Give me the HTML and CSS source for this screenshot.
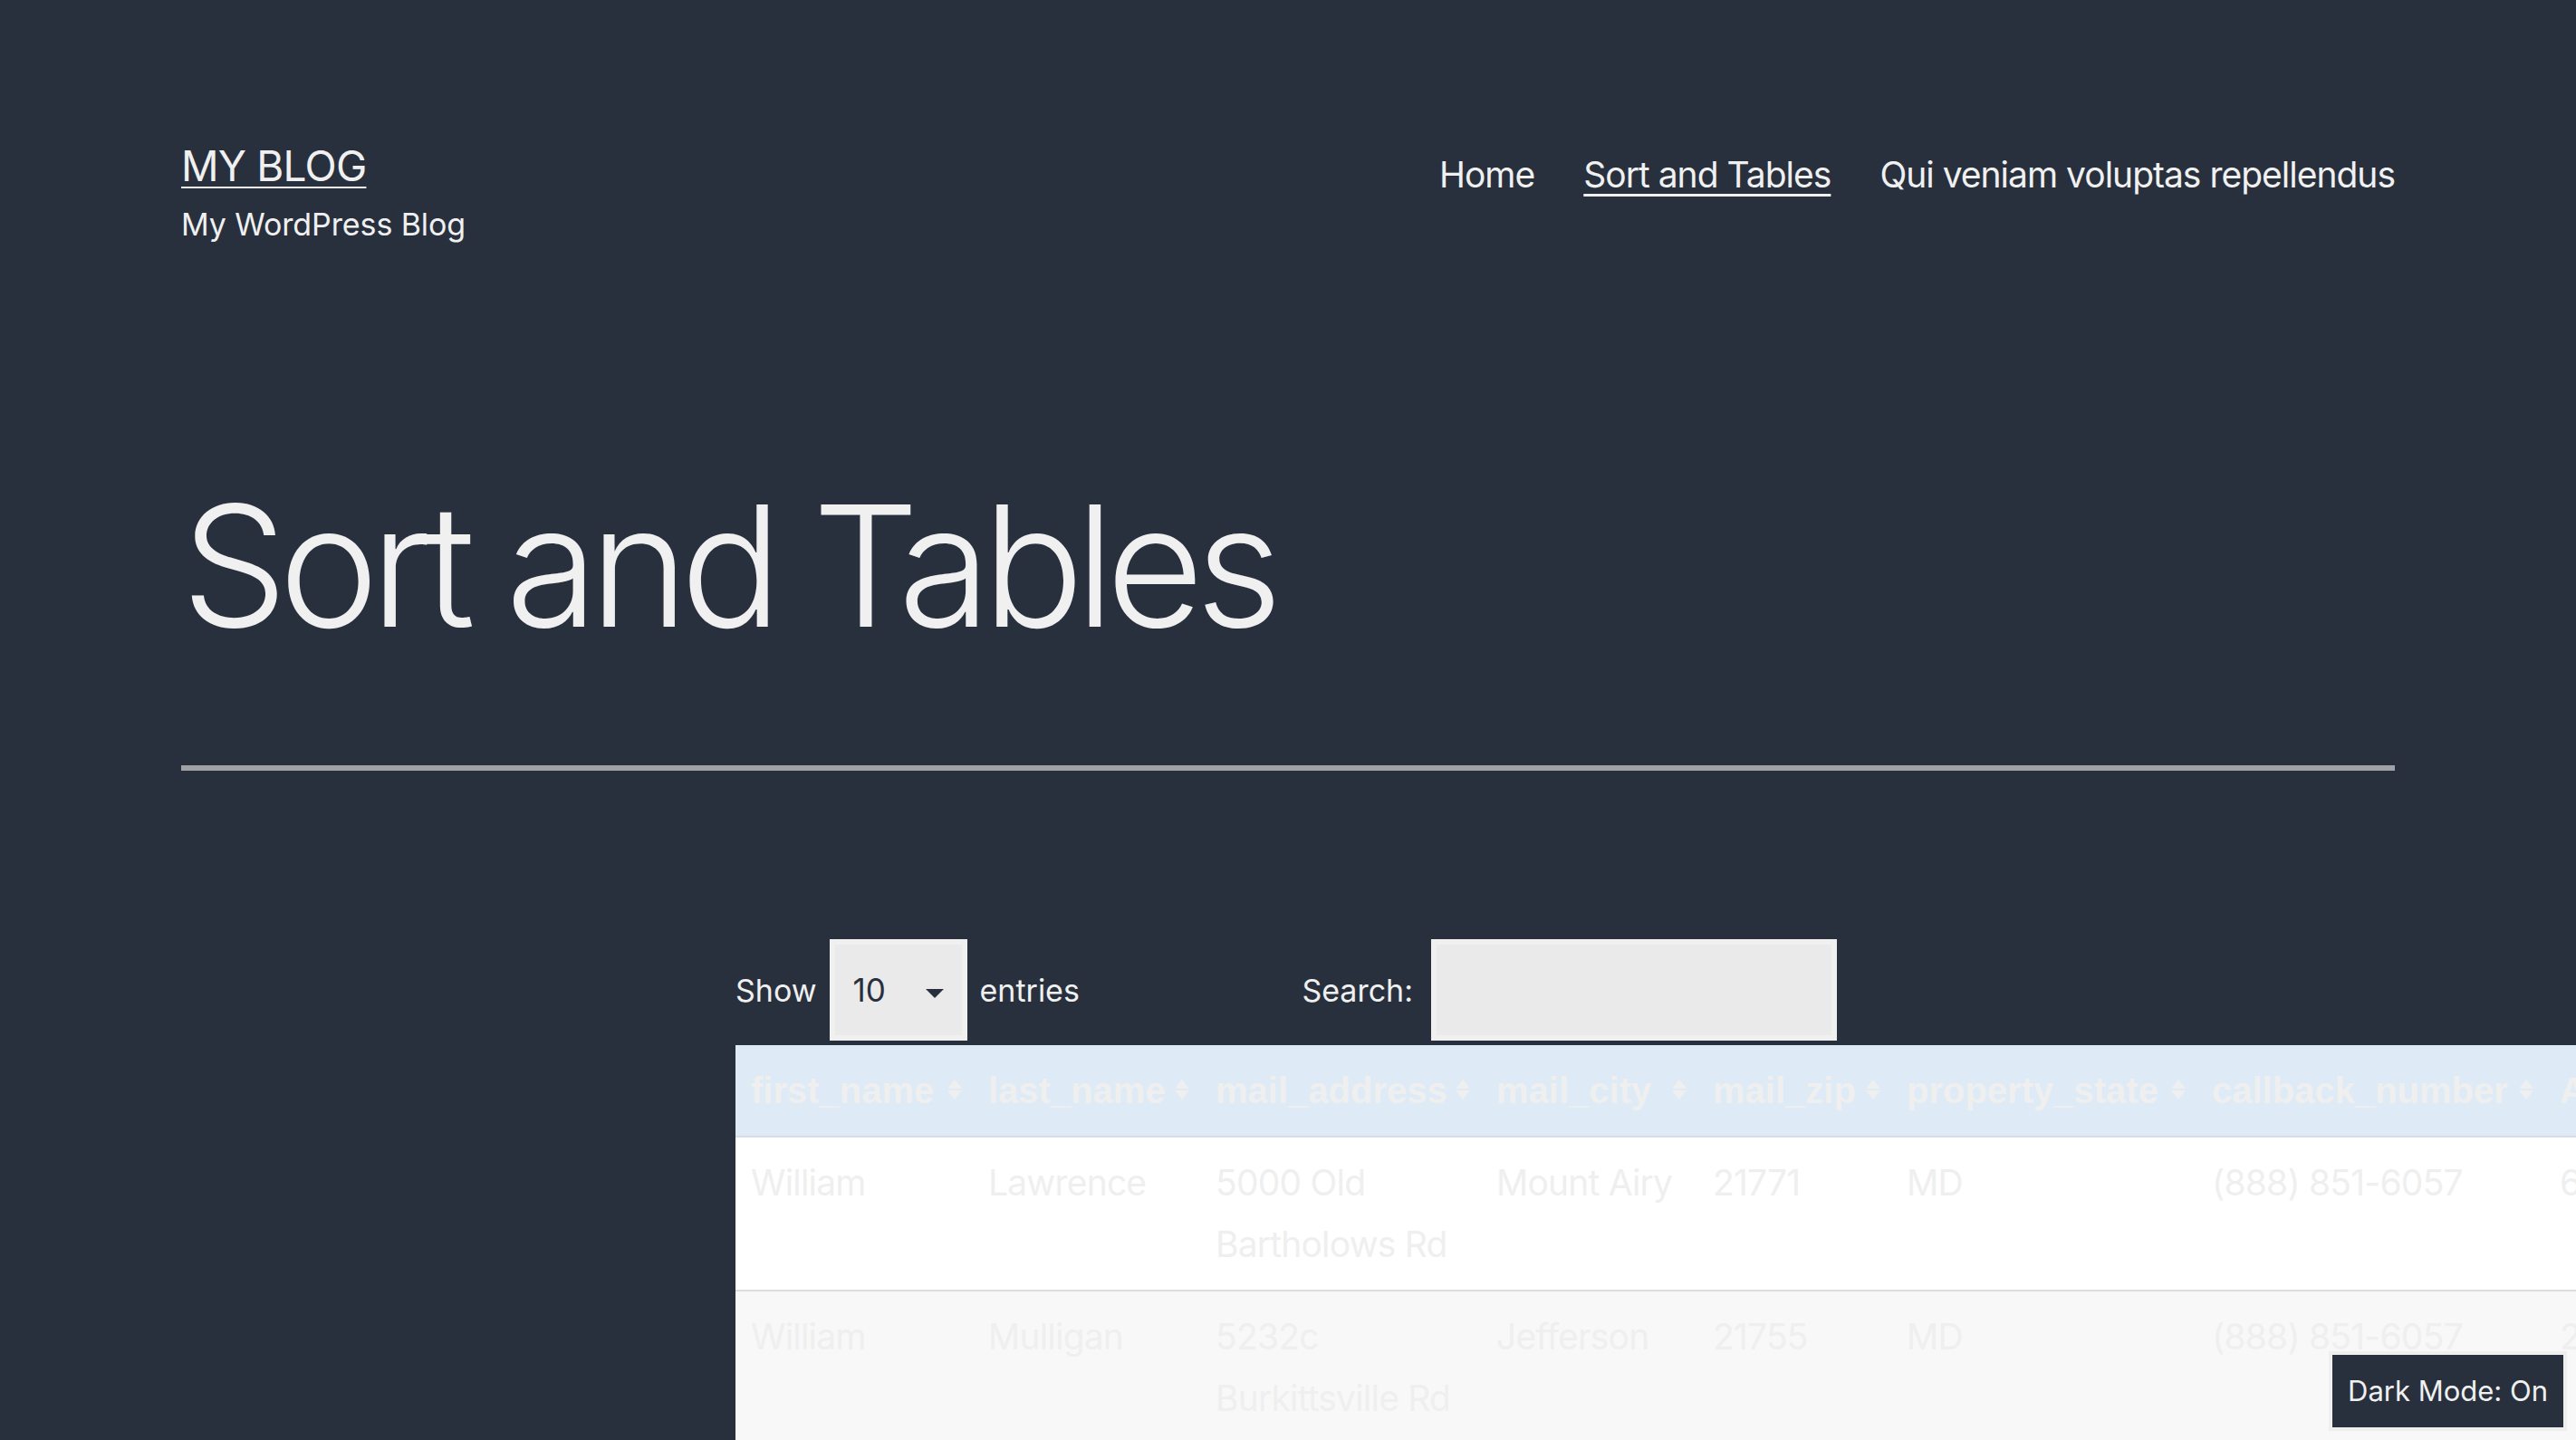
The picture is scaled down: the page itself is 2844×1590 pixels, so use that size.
FILE: index.html
```html
<!DOCTYPE html>
<html lang="en">
<head>
<meta charset="utf-8">
<title>Sort and Tables – MY BLOG</title>
<link rel="stylesheet" href="styles.css">
</head>
<body>
<header class="site-header">
  <div class="branding">
    <p class="site-title"><a href="#">MY BLOG</a></p>
    <p class="site-description">My WordPress Blog</p>
  </div>
  <nav class="primary-nav" aria-label="Primary menu">
    <ul class="menu">
      <li><a href="#">Home</a></li>
      <li class="current"><a href="#">Sort and Tables</a></li>
      <li><a href="#">Qui veniam voluptas repellendus</a></li>
    </ul>
  </nav>
</header>
<main class="site-main">
  <header class="entry-header">
    <h1 class="entry-title">Sort and Tables</h1>
  </header>
  <hr class="separator">
  <div class="entry-content">
    <div class="dt-controls">
      <label class="dt-length">Show
        <span class="select-wrap">
          <select><option>10</option><option>25</option><option>50</option><option>100</option></select>
          <svg class="select-arrow" viewBox="0 0 10 5" aria-hidden="true"><polygon points="0,0 10,0 5,5" fill="#28303d"/></svg>
        </span>
        entries</label>
      <label class="dt-filter">Search: <input type="search"></label>
    </div>
    <table class="dt-table">
      <colgroup>
        <col class="c1"><col class="c2"><col class="c3"><col class="c4"><col class="c5"><col class="c6"><col class="c7"><col class="c8">
      </colgroup>
      <thead>
        <tr>
          <th>first_name</th>
          <th>last_name</th>
          <th>mail_address</th>
          <th>mail_city</th>
          <th>mail_zip</th>
          <th>property_state</th>
          <th>callback_number</th>
          <th>Agent_id</th>
        </tr>
      </thead>
      <tbody>
        <tr class="odd">
          <td>William</td>
          <td>Lawrence</td>
          <td class="wrap">5000 Old Bartholows Rd</td>
          <td>Mount Airy</td>
          <td>21771</td>
          <td>MD</td>
          <td>(888) 851-6057</td>
          <td>6412</td>
        </tr>
        <tr class="even">
          <td>William</td>
          <td>Mulligan</td>
          <td class="wrap">5232c Burkittsville Rd</td>
          <td>Jefferson</td>
          <td>21755</td>
          <td>MD</td>
          <td>(888) 851-6057</td>
          <td>2318</td>
        </tr>
      </tbody>
    </table>
  </div>
</main>
<button class="dark-toggle" type="button">Dark Mode: On</button>
</body>
</html>
```
FILE: styles.css
```css
html {
  overflow: hidden;
}

body {
  margin: 0;
  background: #28303d;
  color: #f0f0f0;
  font-family: Inter, "Noto Sans", "Liberation Sans", sans-serif;
}

/* ---------- site header ---------- */
.site-header {
  display: flex;
  justify-content: space-between;
  align-items: flex-start;
  padding: 152px 200px 0;
}

.site-title {
  margin: 0;
  font-size: 46px;
  line-height: 62px;
  letter-spacing: -0.8px;
}

.site-title a {
  color: inherit;
  text-decoration: underline;
  text-decoration-thickness: 2px;
  text-underline-offset: 6px;
}

.site-description {
  margin: 7px 0 0;
  font-size: 34px;
  line-height: 54px;
  letter-spacing: -0.1px;
}

.menu {
  list-style: none;
  display: flex;
  gap: 54px;
  margin: 11px 0 0;
  padding: 0;
  font-size: 39px;
  line-height: 60px;
  letter-spacing: -1px;
}

.menu a {
  color: inherit;
  text-decoration: none;
}

.menu .current a {
  text-decoration: underline;
  text-decoration-thickness: 3px;
  text-underline-offset: 7px;
}

/* ---------- main ---------- */
.site-main {
  padding: 0 200px;
}

.entry-header {
  margin: 0;
}

.entry-title {
  margin: 240px 0 0;
  font-size: 186px;
  font-weight: 300;
  line-height: 220px;
  letter-spacing: -9.4px;
}

.separator {
  margin: 110px 0 0;
  border: 0;
  height: 6px;
  background: #a0a2a7;
}

.entry-content {
  width: 1220px;
  margin: 186px auto 0;
}

/* ---------- datatable controls ---------- */
.dt-controls {
  display: flex;
  justify-content: space-between;
  align-items: center;
  height: 112px;
  padding-right: 4px;
  font-size: 34px;
}

.dt-length {
  display: flex;
  align-items: center;
  gap: 14px;
}

.select-wrap {
  position: relative;
  display: block;
}

.select-wrap select {
  display: block;
  appearance: none;
  -webkit-appearance: none;
  box-sizing: border-box;
  width: 152px;
  height: 112px;
  margin: 0;
  border: 6px solid #f0f0f0;
  border-radius: 0;
  background: #eaeaeb;
  color: #28303d;
  font-family: Inter, "Noto Sans", sans-serif;
  font-size: 35px;
  padding: 0 0 0 20px;
  outline: none;
}

.select-arrow {
  position: absolute;
  right: 26px;
  top: 55px;
  width: 20px;
  height: 10px;
  pointer-events: none;
}

.dt-filter {
  display: flex;
  align-items: center;
  gap: 20px;
}

.dt-filter input {
  box-sizing: border-box;
  width: 448px;
  height: 112px;
  margin: 0;
  border: 6px solid #f0f0f0;
  border-radius: 0;
  background: #eaeaeb;
  outline: none;
}

/* ---------- datatable ---------- */
.dt-table {
  margin-top: 5px;
  table-layout: fixed;
  width: 2297px;
  border-collapse: collapse;
  border-spacing: 0;
}

.c1 { width: 262px; }
.c2 { width: 251px; }
.c3 { width: 310px; }
.c4 { width: 239px; }
.c5 { width: 214px; }
.c6 { width: 337px; }
.c7 { width: 384px; }
.c8 { width: 300px; }

.dt-table th {
  position: relative;
  box-sizing: border-box;
  padding: 16px 42px 16px 17px;
  background: #deebf6;
  color: #efefef;
  font-family: "Liberation Sans", Arial, sans-serif;
  font-weight: 700;
  font-size: 40px;
  line-height: 68px;
  text-align: left;
  white-space: nowrap;
  border-bottom: 2px solid #d6dde4;
}

.dt-table th::before,
.dt-table th::after {
  content: "";
  position: absolute;
  right: 12px;
  width: 0;
  height: 0;
  border-left: 8.5px solid transparent;
  border-right: 8.5px solid transparent;
}

.dt-table th::before {
  top: 38px;
  border-bottom: 10px solid #efefef;
}

.dt-table th::after {
  top: 50px;
  border-top: 10px solid #efefef;
}

.dt-table td {
  padding: 16px 12px 16px 17px;
  color: #efefef;
  font-size: 39px;
  line-height: 68px;
  letter-spacing: -0.8px;
  vertical-align: top;
  white-space: nowrap;
}

.dt-table td.wrap {
  white-space: normal;
}

.dt-table tr.odd td {
  background: #ffffff;
}

.dt-table tr.even td {
  background: #f8f8f8;
  border-top: 2px solid #dddddd;
}

/* ---------- dark mode toggle ---------- */
.dark-toggle {
  position: fixed;
  right: 10px;
  bottom: 10px;
  margin: 0;
  padding: 16px 17px;
  border: 4px solid #efefef;
  border-radius: 0;
  background: #28303d;
  color: #f0f0f0;
  font-family: Inter, "Noto Sans", sans-serif;
  font-size: 31px;
  line-height: 48px;
}
```
